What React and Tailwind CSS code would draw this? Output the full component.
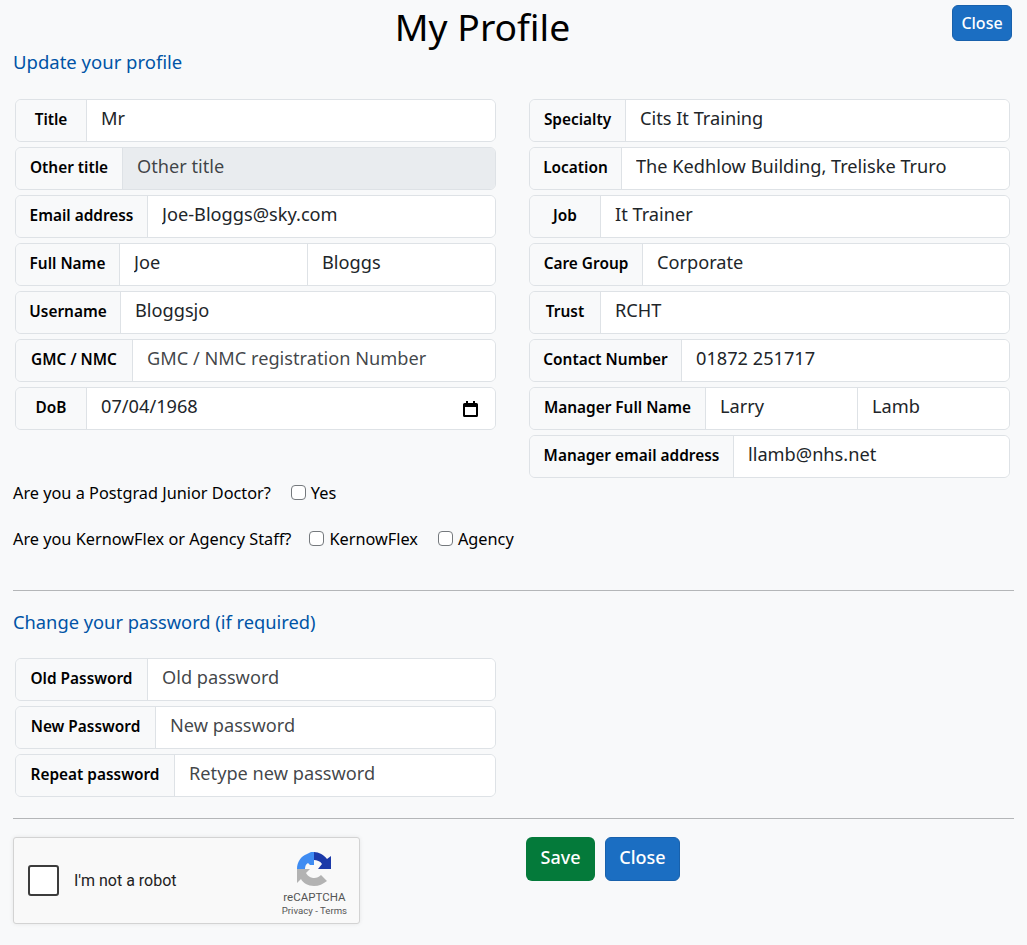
import React from 'react';

const inputCls = "min-w-0 flex-1 px-[14px] pb-[4px] text-[18.2px] text-[#212529] placeholder:text-[#212529d9] outline-none border-l border-[#dee2e6]";

function Row({ label, children, labelW }) {
    return (
        <div className="flex h-[43px] rounded-[6px] border border-[#dee2e6] overflow-hidden">
            <span className={`flex items-center justify-center shrink-0 pb-[1px] bg-[#f8f9fa] text-[15.4px] font-semibold text-[#000] ${labelW}`}>{label}</span>
            {children}
        </div>
    );
}

function Field({ label, labelW, value, placeholder, disabled }) {
    return (
        <Row label={label} labelW={labelW}>
            <input
                className={`${inputCls} ${disabled ? 'bg-[#e9ecef]' : 'bg-white'}`}
                defaultValue={value}
                placeholder={placeholder}
                disabled={disabled}
            />
        </Row>
    );
}

function Check({ label, className }) {
    return (
        <label className={`flex items-center gap-[5px] ${className || ''}`}>
            <input type="checkbox" className="appearance-none w-[15px] h-[15px] -mt-[2px] bg-white border border-[#75797d] rounded-[4px]" />
            {label}
        </label>
    );
}

function Recaptcha() {
    return (
        <div className="flex items-center w-[347px] h-[87px] bg-[#f9f9f9] border border-[#d3d3d3] rounded-[3px] shadow-[0_0_4px_rgba(0,0,0,0.08)]" style={{ fontFamily: 'Roboto, sans-serif' }}>
            <div className="ml-[14px] w-[31px] h-[31px] bg-white border-2 border-[#3c3c3c] rounded-[3px]"></div>
            <span className="ml-[15px] pt-[1px] text-[16px] text-[#222]">I'm not a robot</span>
            <div className="ml-auto mr-[12px] self-start mt-[13px] flex flex-col items-center">
                <svg width="36" height="36" viewBox="0 0 36 36">
                    <path d="M1 18 C1 11 5 5 11 3 L15 1 L18 1 L18 14 L14 14 L12 12 C10 13 9 15 9 18 Z" fill="#3f8cf2" />
                    <path d="M18 1 C23 1 28 4 31 8 L35 5 L35 18 L22 18 L26 13 C24 10 21 9 18 9 Z" fill="#1c3aa9" />
                    <path d="M1 18 L14 18 L10 22 C12 26 16 27 18 27 C21 27 23 26 25 24 L31 30 C27 33 23 35 18 35 C12 35 7 32 5 28 L1 32 Z" fill="#b3b3b3" />
                </svg>
                <span className="text-[11.5px] leading-[14px] mt-[3px] text-[#555]">reCAPTCHA</span>
                <span className="text-[9.6px] leading-[12px] mt-[1px] text-[#555]">Privacy - Terms</span>
            </div>
        </div>
    );
}

export default function App() {
    return (
        <div className="min-h-[945px] bg-[#f8f9fa] px-[13px] text-black overflow-hidden" style={{ fontFamily: '"Noto Sans", sans-serif' }}>
            {/* header */}
            <div className="flex items-start h-[44px]">
                <h1 className="flex-1 text-center text-[37.3px] leading-[54px] font-normal">My Profile</h1>
                <button className="mt-[5px] mr-[2px] w-[60px] h-[36px] rounded-[6px] bg-[#1b6ec2] border border-[#1861ac] text-white text-[16px] font-medium">Close</button>
            </div>
            <h2 className="mt-[7px] text-[18.5px] leading-[22px] text-[#0054a6]">Update your profile</h2>

            <div className="mt-[26px] flex gap-[33px] pl-[2px] pr-[4px]">
                <div className="w-[481px] flex flex-col gap-[5px]">
                    <Field label="Title" labelW="w-[70px]" value="Mr" />
                    <Field label="Other title" labelW="w-[106px]" placeholder="Other title" disabled />
                    <Field label="Email address" labelW="w-[131px]" value="Joe-Bloggs@sky.com" />
                    <Row label="Full Name" labelW="w-[103px]">
                        <input className={`${inputCls} bg-white w-[188px] flex-none`} defaultValue="Joe" />
                        <input className={`${inputCls} bg-white`} defaultValue="Bloggs" />
                    </Row>
                    <Field label="Username" labelW="w-[104px]" value="Bloggsjo" />
                    <Field label="GMC / NMC" labelW="w-[116px]" placeholder="GMC / NMC registration Number" />
                    <Row label="DoB" labelW="w-[70px]">
                        <input className={`${inputCls} bg-white`} defaultValue="07/04/1968" />
                        <span className="flex items-center bg-white pr-[17px]">
                            <svg width="15" height="16" viewBox="0 0 15 16">
                                <path fillRule="evenodd" d="M3 0h2v2h5V0h2v2h1.5A1.5 1.5 0 0 1 15 3.5v11a1.5 1.5 0 0 1-1.5 1.5h-12A1.5 1.5 0 0 1 0 14.500v-11A1.500 1.500 0 0 1 1.500 2H3zM2 6v8h11V6z" fill="#000" />
                            </svg>
                        </span>
                    </Row>
                </div>
                <div className="w-[481px] flex flex-col gap-[5px]">
                    <Field label="Specialty" labelW="w-[95px]" value="Cits It Training" />
                    <Field label="Location" labelW="w-[91px]" value="The Kedhlow Building, Treliske Truro" />
                    <Field label="Job" labelW="w-[70px]" value="It Trainer" />
                    <Field label="Care Group" labelW="w-[112px]" value="Corporate" />
                    <Field label="Trust" labelW="w-[70px]" value="RCHT" />
                    <Field label="Contact Number" labelW="w-[151px]" value="01872 251717" />
                    <Row label="Manager Full Name" labelW="w-[175px]">
                        <input className={`${inputCls} bg-white w-[152px] flex-none`} defaultValue="Larry" />
                        <input className={`${inputCls} bg-white`} defaultValue="Lamb" />
                    </Row>
                    <Field label="Manager email address" labelW="w-[203px]" value="llamb@nhs.net" />
                </div>
            </div>

            <div className="mt-[3px] text-[16.3px] leading-[24px]">
                <div className="flex items-center">
                    <span>Are you a Postgrad Junior Doctor?</span>
                    <Check label="Yes" className="ml-[20px]" />
                </div>
                <div className="flex items-center mt-[22px]">
                    <span>Are you KernowFlex or Agency Staff?</span>
                    <Check label="KernowFlex" className="ml-[18px]" />
                    <Check label="Agency" className="ml-[20px]" />
                </div>
            </div>

            <hr className="mt-[39px] border-[#b4b6b8]" />
            <h2 className="mt-[20px] text-[18.3px] leading-[22px] text-[#0054a6]">Change your password (if required)</h2>

            <div className="mt-[25px] ml-[2px] w-[481px] flex flex-col gap-[5px]">
                <Field label="Old Password" labelW="w-[131px]" placeholder="Old password" />
                <Field label="New Password" labelW="w-[139px]" placeholder="New password" />
                <Field label="Repeat password" labelW="w-[158px]" placeholder="Retype new password" />
            </div>

            <hr className="mt-[21px] border-[#b4b6b8]" />
            <div className="mt-[18px] flex items-start">
                <Recaptcha />
                <div className="ml-[166px] flex gap-[10px]">
                    <button className="w-[69px] h-[44px] pb-[3px] rounded-[6px] bg-[#047a3a] text-white text-[18px] font-medium">Save</button>
                    <button className="w-[75px] h-[44px] pb-[3px] rounded-[6px] bg-[#1b6ec2] border border-[#1861ac] text-white text-[18px] font-medium">Close</button>
                </div>
            </div>
        </div>
    );
}
